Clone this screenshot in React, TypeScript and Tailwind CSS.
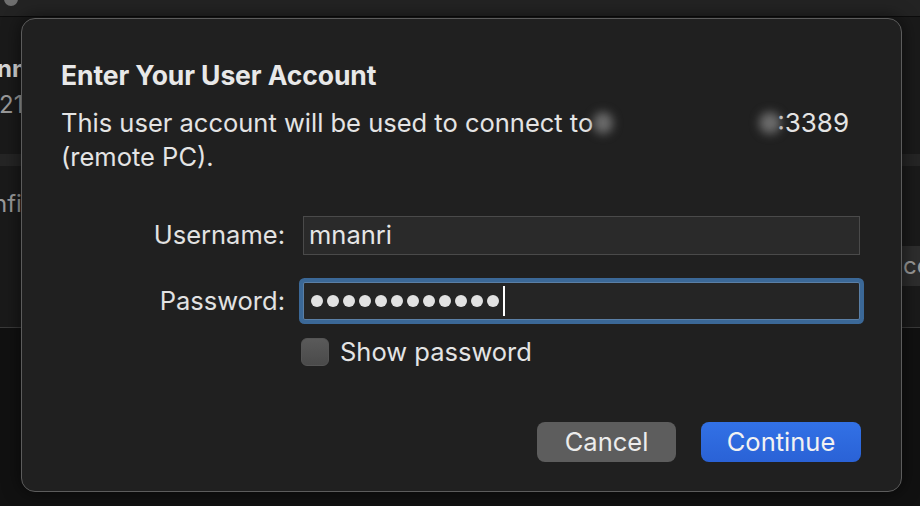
import React from "react";

export default function App() {
  const dots = Array.from({ length: 12 });
  return (
    <div
      className="relative w-[920px] h-[506px] overflow-hidden bg-[#121212] text-[#e6e6e6]"
      style={{ fontFamily: "Inter, 'Liberation Sans', sans-serif" }}
    >
      {/* background window */}
      <div className="flex flex-col h-full">
        <div className="h-[17px] bg-[#232323] border-b border-[#0c0c0c] flex items-start pl-[4px]">
          <div className="w-[14px] h-[7px] rounded-b-full bg-[#6e6e6e] -mt-[1px]" />
        </div>
        <div className="h-[311px] flex flex-col bg-[#1a1a1a] border-b border-[#3a3a3a]">
          <div className="h-[137px] flex flex-col pt-[38px] pl-0">
            <div className="text-[24px] font-bold text-[#d8d8d8] leading-[28px] -ml-[3px]">nn</div>
            <div className="text-[24px] text-[#9a9a9a] leading-[28px] mt-[8px] -ml-[1px]">21</div>
          </div>
          <div className="h-[12px] bg-[#252525]" />
          <div className="flex-1 flex">
            <div className="flex-1 pt-[24px]">
              <div className="text-[24px] text-[#9a9a9a] leading-[28px] -ml-[7px]">nfi</div>
            </div>
            <div className="w-[18px] pt-[80px]">
              <div className="h-[40px] bg-[#2d2d2d] text-[24px] text-[#9a9a9a] leading-[40px] pl-[1px] overflow-hidden whitespace-nowrap">
                ce
              </div>
            </div>
          </div>
        </div>
        <div className="flex-1 bg-[#111111]" />
      </div>

      {/* dialog */}
      <div className="absolute left-[21px] top-[18px] w-[881px] h-[474px] rounded-[14px] border border-[#5c5c5c] bg-[#202020] shadow-[0_0_18px_rgba(0,0,0,0.6)] flex flex-col pl-[39px] pr-[40px] pt-[40px] pb-[29px]">
        <div className="text-[26.5px] font-bold leading-[32px] text-[#e8e8e8] tracking-[-0.1px]">Enter Your User Account</div>
        <div className="mt-[15px] text-[25.5px] leading-[34px] text-[#e4e4e4]">
          <div className="flex items-center whitespace-nowrap">
            <span>This user account will be used to connect to </span>
            <span className="inline-block w-[184px] h-[26px] relative">
              <span className="absolute left-[0px] top-[2px] w-[20px] h-[22px] rounded-full bg-[#6a6a6a] blur-[5px]" />
              <span className="absolute right-[-4px] top-[2px] w-[22px] h-[22px] rounded-full bg-[#6a6a6a] blur-[5px]" />
            </span>
            <span className="text-[26px]">:3389</span>
          </div>
          <div>(remote PC).</div>
        </div>

        <div className="mt-[42px] flex flex-col">
          <div className="flex items-center">
            <div className="w-[224px] text-right text-[25.5px] text-[#e2e2e2]">Username:</div>
            <div className="ml-[18px] w-[557px] h-[39px] bg-[#2a2a2a] border border-[#4a4a4a] flex items-center pl-[5px] text-[25.5px] text-[#e6e6e6]">
              mnanri
            </div>
          </div>
          <div className="flex items-center mt-[27px]">
            <div className="w-[224px] text-right text-[25.5px] text-[#e2e2e2]">Password:</div>
            <div className="ml-[18px] w-[557px] h-[38px] bg-[#252525] border border-[#5a7fa6] rounded-[2px] ring-4 ring-[#3b6897] flex items-center pl-[7px] gap-[4px]">
              {dots.map((_, i) => (
                <span key={i} className="w-[12px] h-[12px] rounded-full bg-[#e2e2e2]" />
              ))}
              <span className="w-[2px] h-[30px] bg-white" />
            </div>
          </div>
          <div className="flex items-center mt-[13px] ml-[240px]">
            <div className="w-[28px] h-[28px] rounded-[6px] bg-gradient-to-b from-[#5a5a5a] to-[#4a4a4a] border border-[#555]" />
            <div className="ml-[11px] text-[25.5px] text-[#e4e4e4]">Show password</div>
          </div>
        </div>

        <div className="mt-auto flex justify-end gap-[25px]">
          <button className="w-[139px] h-[40px] rounded-[8px] bg-[#5d5d5d] text-[25.5px] text-[#ececec]">Cancel</button>
          <button className="w-[160px] h-[40px] rounded-[8px] bg-gradient-to-b from-[#3271e6] to-[#2a62d6] text-[25.5px] text-[#f2f2f2]">
            Continue
          </button>
        </div>
      </div>
    </div>
  );
}
